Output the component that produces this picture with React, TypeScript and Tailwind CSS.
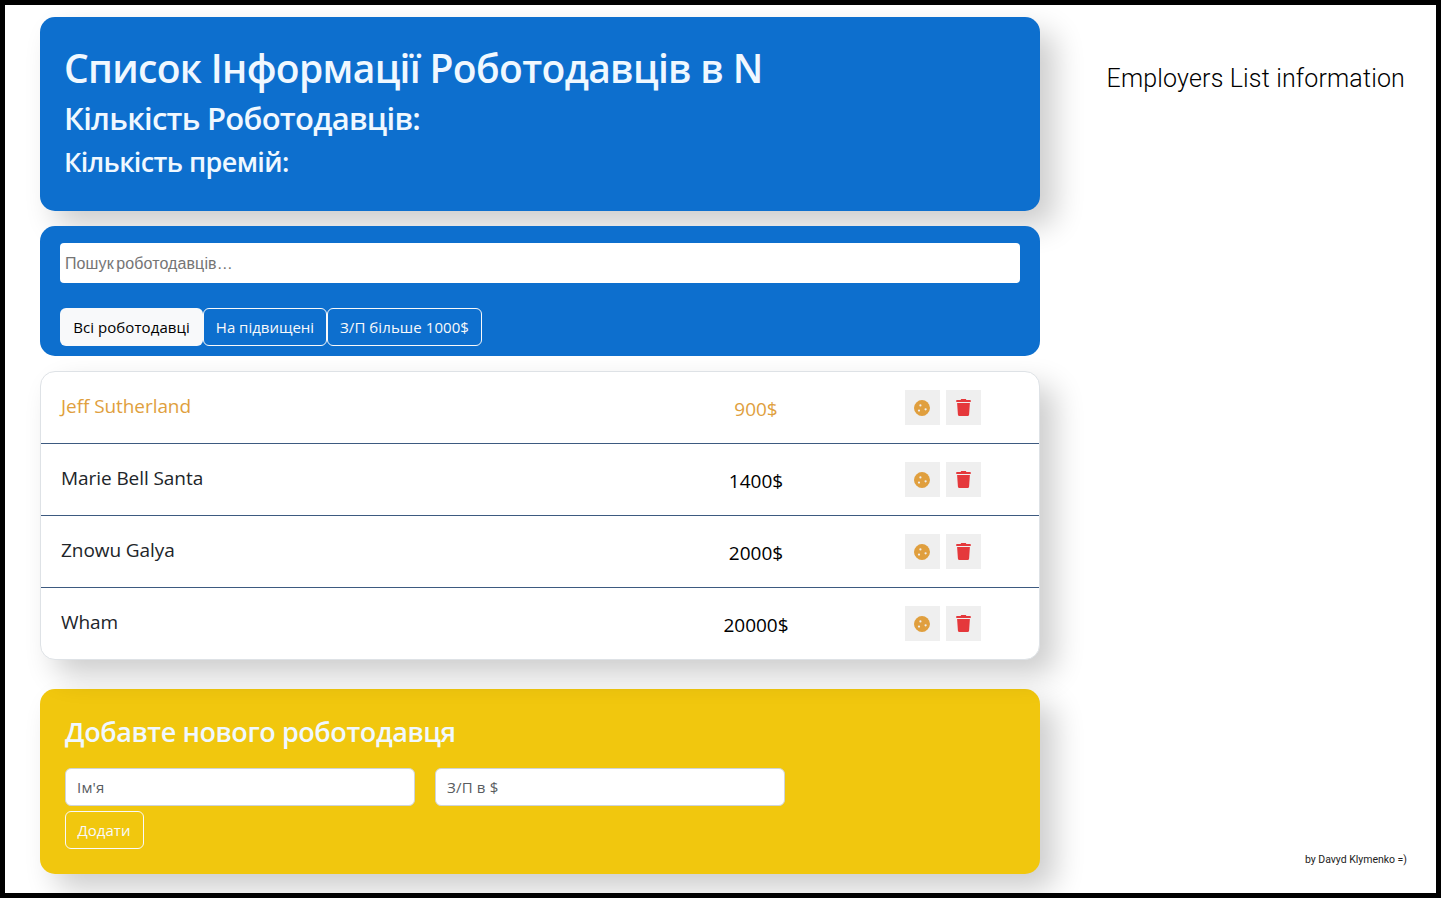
const card = "rounded-[15px] shadow-[15px_15px_30px_rgba(0,0,0,0.2)]";

const employers = [
  { name: "Jeff Sutherland", salary: "900$", bonus: true },
  { name: "Marie Bell Santa", salary: "1400$", bonus: false },
  { name: "Znowu Galya", salary: "2000$", bonus: false },
  { name: "Wham", salary: "20000$", bonus: false },
];

function CookieIcon() {
  return (
    <svg width="16" height="16" viewBox="0 0 16 16">
      <path
        fill="currentColor"
        d="M8 0 10.9.5 13.4 2.2 15.1 4.6 16 8 15.3 11 13.5 13.6 11 15.4 8 16 5 15.4 2.4 13.6.6 11 0 8 .6 5 2.4 2.4 5 .6Z"
      />
      <circle cx="6.4" cy="5.4" r="1.1" fill="#efefef" />
      <circle cx="5" cy="10.6" r="1.1" fill="#efefef" />
      <circle cx="11.6" cy="9.3" r="1.1" fill="#efefef" />
    </svg>
  );
}

function TrashIcon() {
  return (
    <svg width="15" height="17" viewBox="0 0 15 17" fill="currentColor">
      <path d="M5.2 0h4.6l.6 1h3.8q.6 0 .6.6v.8q0 .6-.6.6H.8q-.6 0-.6-.6v-.8q0-.6.6-.6h3.8Z" />
      <path d="M1.1 4h12.8l-.8 11.5q-.1 1.5-1.6 1.5H3.5q-1.5 0-1.6-1.5Z" />
    </svg>
  );
}

function Header() {
  return (
    <header className={`${card} h-[194px] bg-[#0d6fce] px-6 pt-[27px] font-semibold text-[#f0f8ff]`}>
      <h1 className="text-[39px] leading-[48px] tracking-[-0.66px]">Список Інформації Роботодавців в N</h1>
      <h2 className="mt-[7px] text-[31px] leading-[38px] tracking-[-0.73px]">Кількість Роботодавців:</h2>
      <h3 className="mt-2 text-[27px] leading-[34px] tracking-[-0.6px]">Кількість премій:</h3>
    </header>
  );
}

function SearchPanel() {
  return (
    <section className="relative mt-[15px] h-[130px] rounded-[15px] bg-[#0d6fce] px-5 pt-[17px]">
      <input
        className="block h-10 w-full rounded-[4px] bg-white px-[5px] pt-[2px] font-['Liberation_Sans'] text-[16px] tracking-[0.1px] [word-spacing:-2px] placeholder:text-[#757575]"
        placeholder="Пошук роботодавців…"
      />
      <div className="mt-[25px] flex text-[15px] text-[#f8f9fa]">
        <button className="h-[38px] w-[143px] rounded-[6px] bg-[#f8f9fa] tracking-[0.08px] text-black">Всі роботодавці</button>
        <button className="h-[38px] w-[124px] rounded-[6px] border border-[#f8f9fa]">На підвищені</button>
        <button className="h-[38px] w-[155px] rounded-[6px] border border-[#f8f9fa] tracking-[0.08px]">З/П більше 1000$</button>
      </div>
    </section>
  );
}

function EmployersList() {
  return (
    <ul className={`${card} relative mt-[15px] h-[289px] overflow-hidden border border-[#dee2e6] bg-white`}>
      {employers.map((e) => (
        <li
          key={e.name}
          className={`flex h-[72px] border-b border-[#3d5a80] pl-5 text-[19px] last:border-b-0 ${e.bonus ? "text-[#e09f3e]" : "text-[#212529]"}`}
        >
          <span className="w-[595px] pt-[20px] leading-[28px] tracking-[-0.07px]">{e.name}</span>
          <span className={`w-[200px] pt-[23px] text-center leading-[28px] ${e.bonus ? "" : "text-black"}`}>{e.salary}</span>
          <div className="ml-[49px] flex gap-[6px] pt-[18px]">
            <button className="flex size-[35px] items-center justify-center bg-[#efefef] pr-px text-[#e09f3e]">
              <CookieIcon />
            </button>
            <button className="flex size-[35px] items-center justify-center bg-[#efefef] pr-px text-[#e5383b]">
              <TrashIcon />
            </button>
          </div>
        </li>
      ))}
    </ul>
  );
}

function AddForm() {
  const field =
    "h-[38px] w-[350px] rounded-[6px] border border-[#ced4da] bg-white px-[11px] text-[15px] tracking-[0.2px] placeholder:text-[#595c5f]";
  return (
    <section className={`${card} mt-[29px] h-[185px] bg-[#f1c70e] px-[25px] pt-[26px]`}>
      <h3 className="text-[27px] font-semibold leading-[34px] tracking-[-0.42px] text-[#f0f8ff]">Добавте нового роботодавця</h3>
      <div className="mt-[19px] flex gap-5">
        <input className={field} placeholder="Ім'я" />
        <input className={field} placeholder="З/П в $" />
      </div>
      <button className="mt-[5px] h-[38px] w-[79px] rounded-[6px] border border-[#f8f9fa] pr-px text-[15px] text-[#f8f9fa]">Додати</button>
    </section>
  );
}

export default function App() {
  return (
    <div className="flex h-[898px] w-[1441px] justify-between overflow-hidden border-[5px] border-black bg-white pl-[35px] font-['Open_Sans','Noto_Sans',sans-serif]">
      <main className="w-[1000px] pt-3">
        <Header />
        <SearchPanel />
        <EmployersList />
        <AddForm />
      </main>
      <aside className="flex flex-col items-end justify-between pb-[25px] pr-[29px] pt-[56px] font-['Roboto',sans-serif]">
        <p className="pr-[2px] text-[25px] font-light leading-[36px] tracking-[0.16px] text-black">Employers List information</p>
        <p className="text-[10.5px] leading-[16px] tracking-[-0.02px] text-[#222]">by Davyd Klymenko =)</p>
      </aside>
    </div>
  );
}
